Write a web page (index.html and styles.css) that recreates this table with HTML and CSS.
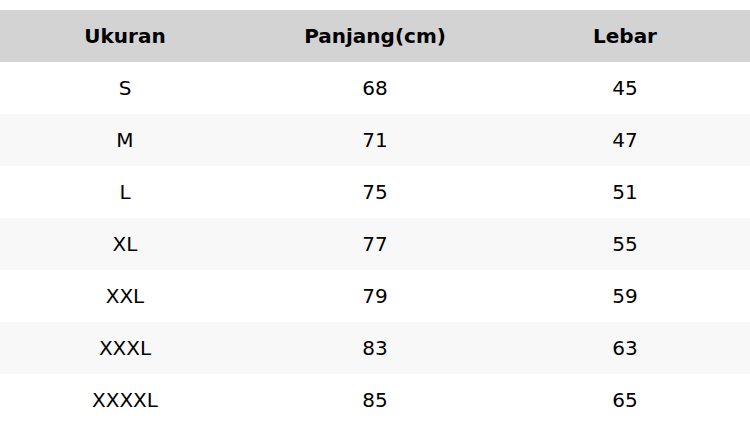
FILE: index.html
```html
<!DOCTYPE html>
<html>
<head>
<meta charset="utf-8">
<link rel="stylesheet" href="styles.css">
</head>
<body>
<table class="size-table">
  <thead>
    <tr><th>Ukuran</th><th>Panjang(cm)</th><th>Lebar</th></tr>
  </thead>
  <tbody>
    <tr><td>S</td><td>68</td><td>45</td></tr>
    <tr><td>M</td><td>71</td><td>47</td></tr>
    <tr><td>L</td><td>75</td><td>51</td></tr>
    <tr><td>XL</td><td>77</td><td>55</td></tr>
    <tr><td>XXL</td><td>79</td><td>59</td></tr>
    <tr><td>XXXL</td><td>83</td><td>63</td></tr>
    <tr><td>XXXXL</td><td>85</td><td>65</td></tr>
  </tbody>
</table>
</body>
</html>
```
FILE: styles.css
```css
html, body {
  margin: 0;
  padding: 0;
  background: #ffffff;
}
body {
  padding-top: 10px;
  font-family: "DejaVu Sans", sans-serif;
  font-size: 20px;
  color: #000000;
}
.size-table {
  width: 750px;
  border-collapse: collapse;
  table-layout: fixed;
}
.size-table th,
.size-table td {
  height: 52px;
  padding: 0;
  text-align: center;
  vertical-align: middle;
}
.size-table th {
  background: #d3d3d3;
  font-weight: bold;
}
.size-table tbody tr:nth-child(even) td {
  background: #f8f8f8;
}
```
